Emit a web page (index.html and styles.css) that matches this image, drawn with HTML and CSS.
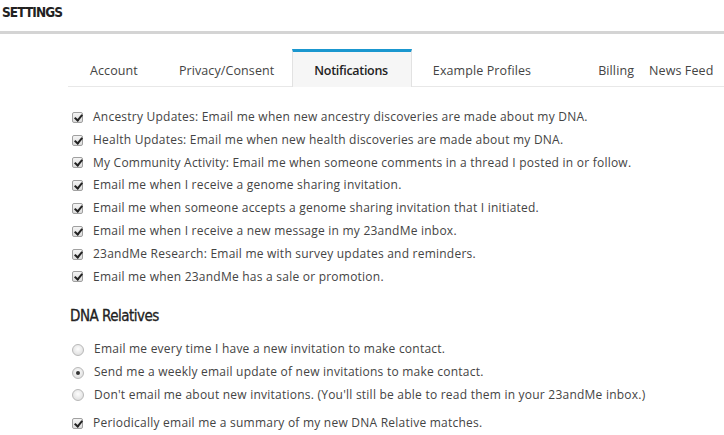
FILE: index.html
```html
<!DOCTYPE html>
<html>
<head>
<meta charset="utf-8">
<link rel="stylesheet" href="styles.css">
</head>
<body>
<header class="page-head">
  <h1 class="page-title">SETTINGS</h1>
</header>
<nav class="tabs">
  <div class="tab tab-account">Account</div>
  <div class="tab tab-privacy">Privacy/Consent</div>
  <div class="tab tab-active">Notifications</div>
  <div class="tab tab-examples">Example Profiles</div>
  <div class="tab tab-billing">Billing</div>
  <div class="tab tab-news">News Feed</div>
</nav>
<main class="content">
  <ul class="opts">
    <li><span class="cb checked"></span>Ancestry Updates: Email me when new ancestry discoveries are made about my DNA.</li>
    <li><span class="cb checked"></span>Health Updates: Email me when new health discoveries are made about my DNA.</li>
    <li><span class="cb checked"></span>My Community Activity: Email me when someone comments in a thread I posted in or follow.</li>
    <li><span class="cb checked"></span>Email me when I receive a genome sharing invitation.</li>
    <li><span class="cb checked"></span>Email me when someone accepts a genome sharing invitation that I initiated.</li>
    <li><span class="cb checked"></span>Email me when I receive a new message in my 23andMe inbox.</li>
    <li><span class="cb checked"></span>23andMe Research: Email me with survey updates and reminders.</li>
    <li><span class="cb checked"></span>Email me when 23andMe has a sale or promotion.</li>
  </ul>
  <h2 class="section-title">DNA Relatives</h2>
  <ul class="opts">
    <li><span class="rb"></span>Email me every time I have a new invitation to make contact.</li>
    <li><span class="rb on"></span>Send me a weekly email update of new invitations to make contact.</li>
    <li><span class="rb"></span>Don't email me about new invitations. (You'll still be able to read them in your 23andMe inbox.)</li>
  </ul>
  <ul class="opts opts-last">
    <li><span class="cb checked"></span>Periodically email me a summary of my new DNA Relative matches.</li>
  </ul>
</main>
</body>
</html>
```
FILE: styles.css
```css
html, body { margin: 0; padding: 0; background: #fff; }
body { font-family: "Open Sans", "Noto Sans", sans-serif; color: #444; overflow: hidden; }

.page-head { height: 31px; border-bottom: 3px solid #d4d4d4; padding-left: 2px; }
.page-title {
  margin: 0; padding-top: 3px;
  font-family: "DejaVu Sans Condensed", "DejaVu Sans", sans-serif;
  font-weight: bold; font-size: 13.5px; letter-spacing: -0.9px; color: #222;
  line-height: 18px;
}

.tabs {
  display: flex; margin: 15px 0 0 68px; height: 37px;
  border-bottom: 1px solid #e8e8e8; white-space: nowrap;
}
.tab {
  flex: none; font-size: 12.5px; letter-spacing: 0.1px; color: #444;
  padding-top: 5px; box-sizing: border-box; height: 37px;
  display: flex; align-items: center;
}
.tab-account { padding-left: 22px; padding-right: 20px; }
.tab-privacy { padding-left: 21px; padding-right: 18px; }
.tab-examples { padding-left: 21px; padding-right: 32px; }
.tab-billing { padding-left: 35px; padding-right: 7px; }
.tab-news { padding-left: 8px; padding-right: 8px; }
.tab-active {
  background: #f6f6f6; border: 1px solid #e2e2e2; border-top: 3px solid #1a97cf;
  border-bottom: none; font-weight: 600; color: #222; letter-spacing: -0.3px;
  padding: 2px 23px 0 21px; height: 38px;
}

.content { padding: 19px 0 0 72px; }
.opts { list-style: none; margin: 0; padding: 0; }
.opts li {
  font-size: 12px; letter-spacing: 0.23px; line-height: 22.8px; height: 22.8px;
  display: flex; align-items: center; color: #444; white-space: nowrap;
}
.cb {
  width: 9px; height: 9px; border: 1px solid #a0a0a0; border-radius: 2px;
  background: linear-gradient(#f4f4f4, #dcdcdc); margin-right: 10px; position: relative; flex: none;
}
.cb.checked::after {
  content: ""; position: absolute; left: 3px; top: 0px; width: 3px; height: 6px;
  border: solid #222; border-width: 0 2px 2px 0; transform: rotate(40deg);
}
.rb {
  width: 10px; height: 10px; border-radius: 50%; border: 1px solid #b8b8b8;
  background: radial-gradient(circle at 50% 40%, #fdfdfd, #d8d8d8);
  margin-right: 10px; position: relative; flex: none;
}
.rb.on::after {
  content: ""; position: absolute; left: 3px; top: 3px; width: 4px; height: 4px; border-radius: 50%;
  background: #333;
}
.section-title {
  margin: 18px 0 12px -2px; font-family: "DejaVu Sans Condensed", "DejaVu Sans", sans-serif;
  font-weight: normal; font-size: 15px; letter-spacing: -0.5px; color: #222; line-height: 20px;
  -webkit-text-stroke: 0.3px #222;
}
.opts-last { margin-top: 5px; }
```
